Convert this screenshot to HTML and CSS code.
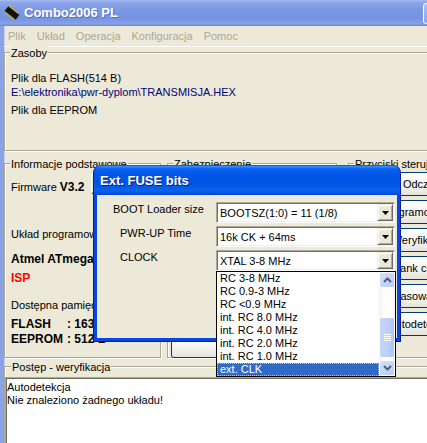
FILE: index.html
```html
<!DOCTYPE html>
<html lang="pl">
<head>
  <meta charset="UTF-8">
  <title>Combo2006 PL</title>
  <link rel="stylesheet" href="styles.css">
</head>
<body>
  <div class="window">
    <div class="titlebar">
      <svg class="app-icon" width="16" height="16" viewBox="0 0 16 16">
        <g transform="rotate(38 8 8)">
          <rect x="1" y="5" width="14" height="6" fill="#111"/>
          <g fill="#e0b800">
            <rect x="2" y="3.5" width="1.4" height="1.5"/><rect x="5" y="3.5" width="1.4" height="1.5"/>
            <rect x="8" y="3.5" width="1.4" height="1.5"/><rect x="11" y="3.5" width="1.4" height="1.5"/>
            <rect x="2" y="11" width="1.4" height="1.5"/><rect x="5" y="11" width="1.4" height="1.5"/>
            <rect x="8" y="11" width="1.4" height="1.5"/><rect x="11" y="11" width="1.4" height="1.5"/>
          </g>
        </g>
      </svg>
      <span class="title">Combo2006 PL</span>
      <div class="title-buttons">
        <span class="tbtn"></span><span class="tbtn"></span><span class="tbtn"></span>
      </div>
    </div>

    <div class="frame">
      <div class="menubar">
        <span>Plik</span>
        <span>Układ</span>
        <span>Operacja</span>
        <span>Konfiguracja</span>
        <span>Pomoc</span>
      </div>

      <div class="group zasoby">
        <div class="caption">Zasoby</div>
        <div class="file-flash">Plik dla FLASH(514 B)</div>
        <div class="file-path">E:\elektronika\pwr-dyplom\TRANSMISJA.HEX</div>
        <div class="file-eeprom">Plik dla EEPROM</div>
      </div>

      <div class="group-row">
        <div class="group info">
          <div class="caption">Informacje podstawowe</div>
          <div class="fw-row">
            <span>Firmware</span>
            <b class="fw-ver">V3.2</b>
            <span class="fw-box"></span>
          </div>
          <div class="chip-label">Układ programowany</div>
          <div class="chip-name">Atmel ATmega16</div>
          <div class="chip-mode">ISP</div>
          <div class="mem-label">Dostępna pamięć</div>
          <div class="mem-row"><b>FLASH</b><b>: 16384 B</b></div>
          <div class="mem-row eeprom"><b>EEPROM</b><b>: 512 B</b></div>
        </div>

        <div class="group security">
          <div class="caption">Zabezpieczenie</div>
          <button class="btn set-btn">Ustaw</button>
        </div>

        <div class="group controls">
          <div class="caption">Przyciski sterujące</div>
          <button class="btn">Odczyt</button>
          <button class="btn">Programowanie</button>
          <button class="btn">Weryfikacja</button>
          <button class="btn">Blank check</button>
          <button class="btn">Kasowanie</button>
          <button class="btn">Autodetekcja</button>
        </div>
      </div>

      <div class="group progress">
        <div class="caption">Postęp - weryfikacja</div>
        <div class="log">
          <div>Autodetekcja</div>
          <div>Nie znaleziono żadnego układu!</div>
        </div>
      </div>
    </div>
  </div>

  <!-- Ext. FUSE bits window -->
  <div class="dialog">
    <div class="dialog-title">Ext. FUSE bits</div>
    <div class="dialog-body">
      <div class="fuse-label first">BOOT Loader size</div>
      <div class="combo"><span class="combo-text">BOOTSZ(1:0) = 11 (1/8)</span><span class="drop-btn"><svg width="7" height="4" viewBox="0 0 7 4"><polygon points="0,0 7,0 3.5,4" fill="#000"/></svg></span></div>
      <div class="fuse-label">PWR-UP Time</div>
      <div class="combo"><span class="combo-text">16k CK + 64ms</span><span class="drop-btn"><svg width="7" height="4" viewBox="0 0 7 4"><polygon points="0,0 7,0 3.5,4" fill="#000"/></svg></span></div>
      <div class="fuse-label">CLOCK</div>
      <div class="combo"><span class="combo-text">XTAL 3-8 MHz</span><span class="drop-btn"><svg width="7" height="4" viewBox="0 0 7 4"><polygon points="0,0 7,0 3.5,4" fill="#000"/></svg></span></div>
    </div>
  </div>

  <!-- open list of the CLOCK combo -->
  <div class="dropdown">
    <ul class="options">
      <li>RC 3-8 MHz</li>
      <li>RC 0.9-3 MHz</li>
      <li>RC &lt;0.9 MHz</li>
      <li>int. RC 8.0 MHz</li>
      <li>int. RC 4.0 MHz</li>
      <li>int. RC 2.0 MHz</li>
      <li>int. RC 1.0 MHz</li>
      <li class="selected">ext. CLK</li>
    </ul>
    <div class="scrollbar">
      <span class="sb-btn"><svg width="9" height="6" viewBox="0 0 9 6"><polyline points="1,5 4.5,1.5 8,5" fill="none" stroke="#4d6185" stroke-width="2"/></svg></span>
      <div class="sb-track">
        <span class="sb-thumb">
          <svg width="7" height="7" viewBox="0 0 7 7"><g stroke="#fff" stroke-width="1"><line x1="0" y1="0.5" x2="7" y2="0.5"/><line x1="0" y1="2.5" x2="7" y2="2.5"/><line x1="0" y1="4.5" x2="7" y2="4.5"/><line x1="0" y1="6.5" x2="7" y2="6.5"/></g></svg>
        </span>
      </div>
      <span class="sb-btn"><svg width="9" height="6" viewBox="0 0 9 6"><polyline points="1,1 4.5,4.5 8,1" fill="none" stroke="#4d6185" stroke-width="2"/></svg></span>
    </div>
  </div>
</body>
</html>
```

FILE: styles.css
```css
* {
  box-sizing: border-box;
}

body {
  margin: 0;
  overflow: hidden;
  background: #ece9d8;
  font-family: "Liberation Sans", Arial, sans-serif;
  font-size: 11px;
  line-height: 14px;
  color: #000;
}

/* main window */

.window {
  width: 495px;
}

.titlebar {
  height: 26px;
  display: flex;
  align-items: center;
  padding-left: 4px;
  background: linear-gradient(#a9bdf1 0, #8ea8ec 2px, #7d99e3 35%, #7793e0 70%, #86a1e8 90%, #6c86d4 100%);
}

.app-icon {
  flex: none;
}

.title {
  margin-left: 4px;
  color: #fff;
  font-size: 13px;
  font-weight: bold;
  text-shadow: 1px 1px 0 #5570c4;
}

.title-buttons {
  margin-left: auto;
  margin-right: 5px;
  display: flex;
  gap: 2px;
}

.tbtn {
  width: 21px;
  height: 21px;
  border: 1px solid #fff;
  border-radius: 3px;
  background: linear-gradient(#aebff0, #8aa4e6);
}

.frame {
  border-left: 4px solid #8aa2e6;
  box-shadow: inset 1px 0 0 #c3d0f3;
}

.menubar {
  height: 21px;
  display: flex;
  gap: 11px;
  padding: 3px 0 0 4px;
  color: #aca899;
  border-bottom: 1px solid #fff;
}

/* etched group boxes */

.group {
  border: 1px solid #aca899;
  box-shadow: inset 1px 1px 0 #fff, 1px 1px 0 #fff;
}

.caption {
  align-self: flex-start;
  width: max-content;
  margin: -7px 0 0 5px;
  padding: 0 1px;
  background: #ece9d8;
}

.zasoby {
  margin-top: 5px;
  height: 99px;
  padding-left: 6px;
}

.zasoby .caption {
  margin-left: -1px;
}

.file-flash {
  margin-top: 11px;
}

.file-path {
  color: #000080;
}

.file-eeprom {
  margin-top: 4px;
}

.group-row {
  display: flex;
  margin-top: 12px;
  height: 195px;
}

.info {
  width: 157px;
  padding-left: 6px;
}

.info .caption {
  margin-left: -1px;
}

.fw-row {
  display: flex;
  margin-top: 9px;
  height: 14px;
}

.fw-ver {
  margin-left: 3px;
  font-size: 12px;
}

.fw-box {
  width: 70px;
  height: 20px;
  margin: -6px 0 0 6px;
  border: 1px solid;
  border-color: #fff #716f64 #716f64 #fff;
  box-shadow: inset -1px -1px 0 #aca899;
}

.chip-label {
  margin-top: 33px;
}

.chip-name,
.chip-mode,
.mem-row {
  font-size: 12px;
  font-weight: bold;
}

.chip-name {
  margin-top: 11px;
}

.chip-mode {
  margin-top: 5px;
  color: #f00;
}

.mem-label {
  margin-top: 13px;
}

.mem-row {
  display: grid;
  grid-template-columns: 56px auto;
  margin-top: 5px;
  white-space: nowrap;
}

.mem-row.eeprom {
  margin-top: 1px;
}

.security {
  width: 170px;
  margin-left: 6px;
  display: flex;
  flex-direction: column;
}

.caption + .set-btn {
  margin: auto 0 -1px 3px;
}

.set-btn {
  width: 66px;
  height: 24px;
}

.controls {
  flex: 1;
  margin: 0 4px 0 11px;
  display: flex;
  flex-direction: column;
  gap: 4px;
}

.controls .caption {
  margin-bottom: -3px;
}

.controls .btn {
  margin-left: 7px;
}

.btn {
  width: 128px;
  height: 24px;
  padding: 0;
  border: 1px solid #003c74;
  border-radius: 3px;
  background: linear-gradient(#fff, #f3f3ee 60%, #e4e3dc);
  font: inherit;
  color: #000;
}

.progress {
  margin-top: 8px;
  display: flex;
  flex-direction: column;
}

.progress .caption {
  margin-left: 6px;
}

.log {
  margin-top: 3px;
  height: 100px;
  padding: 3px 0 0 1px;
  background: #fff;
  border: 1px solid;
  border-color: #aca899 #fff #fff #aca899;
  box-shadow: inset 1px 1px 0 #716f64;
  line-height: 13px;
}

/* Ext. FUSE bits dialog */

.dialog {
  position: absolute;
  left: 93px;
  top: 165px;
  width: 308px;
  border: 1px solid #001ea0;
  border-top-color: #0a5fe8;
  border-radius: 8px 8px 0 0;
  background: #0846e2;
}

.dialog-title {
  height: 29px;
  display: flex;
  align-items: center;
  padding-left: 6px;
  border-radius: 7px 7px 0 0;
  background: linear-gradient(#3d93ff 0, #0a60f0 3px, #0056e6 9px, #0054e3 60%, #0a62ee 85%, #0046d6 100%);
  color: #fff;
  font-size: 13px;
  font-weight: bold;
  text-shadow: 1px 1px 0 #0a1f82;
}

.dialog-body {
  height: 143px;
  margin: 0 3px 3px;
  padding-top: 7px;
  display: grid;
  grid-template-columns: 119px 179px;
  grid-auto-rows: 21px;
  row-gap: 3px;
  align-content: start;
  background: #ece9d8;
}

.fuse-label {
  padding-left: 23px;
  white-space: nowrap;
}

.fuse-label.first {
  padding-left: 16px;
}

.combo {
  display: flex;
  padding: 1px;
  background: #fff;
  border: 1px solid;
  border-color: #aca899 #fff #fff #aca899;
  box-shadow: inset 1px 1px 0 #716f64, inset -1px -1px 0 #f1efe2;
}

.combo-text {
  flex: 1;
  padding: 2px 0 0 2px;
  white-space: nowrap;
}

.drop-btn {
  width: 16px;
  display: flex;
  align-items: center;
  justify-content: center;
  background: #ece9d8;
  border: 1px solid;
  border-color: #f1efe2 #716f64 #716f64 #f1efe2;
  box-shadow: inset 1px 1px 0 #fff, inset -1px -1px 0 #aca899;
}

/* open list of the CLOCK combo */

.dropdown {
  position: absolute;
  left: 216px;
  top: 271px;
  width: 180px;
  height: 106px;
  display: flex;
  border: 1px solid #000;
  background: #fff;
}

.options {
  flex: 1;
  margin: 0;
  padding: 0;
  list-style: none;
  line-height: 13px;
}

.options li {
  height: 13px;
  padding-left: 3px;
  white-space: nowrap;
}

.options li.selected {
  background: #316ac5;
  color: #fff;
  outline: 1px dotted #e8c070;
  outline-offset: -1px;
}

.scrollbar {
  width: 16px;
  display: flex;
  flex-direction: column;
  background: #fbfbf8;
}

.sb-btn {
  height: 16px;
  display: flex;
  align-items: center;
  justify-content: center;
  border: 1px solid #fff;
  border-radius: 2px;
  background: linear-gradient(135deg, #d6e2fd, #b7cbf7);
}

.sb-track {
  flex: 1;
  padding-top: 29px;
  background: linear-gradient(90deg, #f3f2ec, #fefefb 30%, #fefefb 70%, #f3f2ec);
}

.sb-thumb {
  height: 41px;
  display: flex;
  align-items: center;
  justify-content: center;
  border: 1px solid #fff;
  border-radius: 2px;
  background: linear-gradient(90deg, #c6d6fb, #bccefa 60%, #b1c6f5);
}
```
